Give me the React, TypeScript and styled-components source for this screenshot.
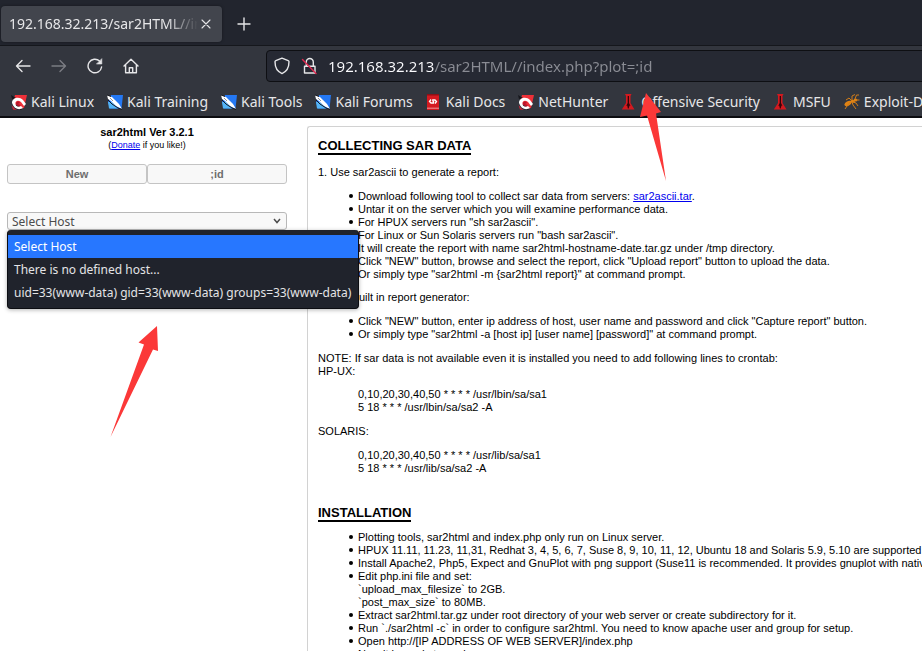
import React from "react";
import styled, { createGlobalStyle } from "styled-components";

const GlobalStyle = createGlobalStyle`
  *, *::before, *::after { box-sizing: border-box; }
  body { margin: 0; background: #fff; }
  button, input, select { font: inherit; margin: 0; }
`;

const uiFont = `"Noto Sans", sans-serif`;
const pageFont = `"Liberation Sans", Arial, sans-serif`;

const Window = styled.div`
  position: relative;
  display: flex;
  flex-direction: column;
  height: 100vh;
  overflow: hidden;
`;

const Chrome = styled.header`
  flex: none;
  background: #33363e;
  border-bottom: 2px solid #0c0c10;
  color: #e6e6e8;
  font: 14px/20px ${uiFont};
`;

const TabBar = styled.div`
  display: flex;
  align-items: center;
  gap: 10px;
  height: 46px;
  padding: 2px 1px 0;
  background: #22252e;
  border-bottom: 1px solid #15171c;
`;

const Tab = styled.div`
  display: flex;
  align-items: center;
  width: 221px;
  height: 36px;
  padding: 0 8px;
  background: #42454d;
  border-radius: 4px;
  box-shadow: 0 0 3px rgba(0, 0, 0, 0.4);
`;

const TabTitle = styled.span`
  flex: 1;
  min-width: 0;
  overflow: hidden;
  white-space: nowrap;
  mask-image: linear-gradient(to left, transparent, #000 32px);
`;

const IconButton = styled.button<{ $size?: number }>`
  display: flex;
  flex: none;
  align-items: center;
  justify-content: center;
  width: ${(p) => p.$size ?? 24}px;
  height: ${(p) => p.$size ?? 24}px;
  padding: 0;
  border: 0;
  background: none;
  color: inherit;

  &:disabled { color: #7b7d83; }
`;

const Toolbar = styled.div`
  display: flex;
  align-items: center;
  height: 40px;
  padding-left: 11px;
`;

const NavButtons = styled.nav`
  display: flex;
  gap: 12px;
  width: 255px;
`;

const UrlBar = styled.div`
  display: flex;
  flex: 1;
  align-items: center;
  gap: 7px;
  height: 32px;
  margin-right: -4px;
  padding-left: 7px;
  background: #262933;
  border: 1px solid #0e0f13;
  border-radius: 4px;
`;

const UrlInput = styled.input`
  flex: 1;
  min-width: 0;
  height: 24px;
  padding: 0;
  border: 0;
  outline: 0;
  font-size: 15px;
  color: transparent;
  background: linear-gradient(90deg, #fbfbfe 106px, #8a8c94 106px);
  background-clip: text;
`;

const Bookmarks = styled.nav`
  display: flex;
  gap: 13px;
  height: 30px;
  padding: 2px 11px 0;
`;

const Bookmark = styled.a`
  display: flex;
  flex: none;
  align-items: center;
  gap: 4px;
  color: inherit;
  text-decoration: none;
  white-space: nowrap;

  svg { flex: none; }
`;

const Page = styled.div`
  display: flex;
  flex: 1;
  gap: 20px;
  min-height: 0;
  padding: 8px 0 0 7px;
  color: #000;
  font: 11px/13px ${pageFont};
`;

const Sidebar = styled.aside`
  flex: none;
  width: 280px;
  text-align: center;
`;

const Version = styled.strong`
  display: block;
`;

const DonateLine = styled.p`
  margin: 0 0 12px;
  font-size: 9px;
`;

const Link = styled.a`
  color: #0000ee;
`;

const PlotButtons = styled.div`
  display: flex;
  margin-bottom: 28px;
`;

const PlotButton = styled.button`
  flex: 1;
  height: 20px;
  padding: 0;
  border: 1px solid #c4c4c4;
  border-radius: 3px;
  background: #f8f8f8;
  color: #6e6e6e;
  font-weight: bold;
`;

const HostPicker = styled.div`
  position: relative;
  font-family: ${uiFont};
  font-size: 12px;
`;

const HostSelect = styled.select`
  display: block;
  appearance: none;
  width: 100%;
  height: 18px;
  padding: 0 4px;
  border: 1px solid #b8b8b8;
  border-radius: 3px;
  background: #f8f8f8;
  color: #4c4c4c;
`;

const SelectArrow = styled.svg`
  position: absolute;
  top: 6px;
  right: 6px;
  pointer-events: none;
`;

const HostMenu = styled.div`
  position: absolute;
  top: 18px;
  left: 0;
  z-index: 2;
  padding: 5px 0 4px;
  border: 1px solid #0c0d12;
  border-top-width: 0;
  border-radius: 4px;
  background: #20232c;
  box-shadow: 0 1px 4px rgba(0, 0, 0, 0.3);
`;

const HostOption = styled.button`
  display: block;
  width: 100%;
  height: 23px;
  padding: 0 7px 0 6px;
  border: 0;
  background: none;
  color: #e4e4e6;
  text-align: left;
  white-space: nowrap;

  &[aria-selected="true"] { background: #2777ff; color: #fff; }
`;

const Panel = styled.main`
  flex: 1;
  min-width: 0;
  padding: 11px 0 0 10px;
  border: 1px solid #d2d2d2;
  border-width: 1px 0 0 1px;
  border-top-left-radius: 3px;
  overflow: hidden;
  white-space: nowrap;
`;

const Heading = styled.h2`
  width: fit-content;
  margin: 0 0 9px;
  border-bottom: 2px solid #000;
  font-size: 13px;
  line-height: 15px;
`;

const Text = styled.p<{ $before?: number }>`
  margin: ${(p) => p.$before ?? 0}px 0 0;
`;

const List = styled.ul<{ $before?: number; $after?: number }>`
  margin: ${(p) => p.$before ?? 11}px 0 ${(p) => p.$after ?? 11}px;
  padding-left: 40px;
  list-style: none;

  li::before {
    content: "";
    display: inline-block;
    width: 4px;
    height: 4px;
    margin: 0 5px 0 -9px;
    border-radius: 50%;
    background: #000;
    vertical-align: 2px;
  }
`;

const Cron = styled.div<{ $before?: number; $after?: number }>`
  margin: ${(p) => p.$before ?? 11}px 0 ${(p) => p.$after ?? 11}px;
  padding-left: 40px;
`;

const Arrows = styled.svg`
  position: absolute;
  top: 0;
  left: 0;
  z-index: 3;
  pointer-events: none;
`;

const stroke = {
  fill: "none",
  stroke: "currentColor",
  strokeWidth: 1.4,
  strokeLinecap: "round" as const,
  strokeLinejoin: "round" as const,
};

const BackIcon = () => (
  <svg width="16" height="16" viewBox="0 0 16 16" {...stroke}>
    <path d="M15 8H1.5M7 2.5 1.5 8 7 13.5" />
  </svg>
);

const ForwardIcon = () => (
  <svg width="16" height="16" viewBox="0 0 16 16" {...stroke}>
    <path d="M1 8h13.5M9 2.5 14.5 8 9 13.5" />
  </svg>
);

const ReloadIcon = () => (
  <svg width="16" height="16" viewBox="0 0 16 16" {...stroke}>
    <path d="M14.6 9A6.8 6.8 0 1 1 12.6 3.1" />
    <path d="M14.8 1v5H9.8z" fill="currentColor" strokeWidth="0.6" />
  </svg>
);

const HomeIcon = () => (
  <svg width="16" height="16" viewBox="0 0 16 16" {...stroke}>
    <path d="M1 8 8 1.2 15 8M2.6 6.8V14.8h10.8V6.8M6.3 14.6V9.8h3.4v4.8" />
  </svg>
);

const ShieldIcon = () => (
  <svg width="16" height="18" viewBox="0 0 16 18" {...stroke}>
    <path d="M8 1.2 14.2 3.6Q15 3.9 15 4.8C15 10 13 14.5 8 16.6 3 14.5 1 10 1 4.8Q1 3.9 1.8 3.6Z" />
  </svg>
);

const LockIcon = () => (
  <svg width="16" height="18" viewBox="0 0 16 18" {...stroke}>
    <path d="M3.500 9.200h10.500v6.800H3.500zM5.300 9V5a3.500 3.500 0 0 1 7 0v4" />
    <path d="M1.500 2.500 15 16.500" stroke="#e22850" strokeWidth="1.4" />
  </svg>
);

const DragonIcon = () => (
  <svg width="16" height="16" viewBox="0 0 16 16">
    <path d="M4 1h12l-3 13-7 1-4-6z" fill="#ee3038" />
    <path d="M0 1 5 4 1 5zM1 9l4 6 6 1-3-4z" fill="#16171c" />
    <path d="M1 9C1 4 8 2 12 6l3 4-2 2-3-4C7 5.500 4 7 4.500 10S8 13 10 12l2 2c-4 2.500-9 1-11-5z" fill="#fff" />
    <path d="M5 9c1-2 3-2 4 0l-2 1 3 1-2 1.500C6 12 5 11 5 9z" fill="#b8152b" />
    <path d="m.5 11 3 3.500L6 16l-4-.5z" fill="#d6253a" />
  </svg>
);

const KnifeIcon = () => (
  <svg width="16" height="16" viewBox="0 0 16 16">
    <path d="M4 1h12l-1.500 13.500H3L1 8z" fill="#2478f4" />
    <path d="M1 8h4l6 6.500H2z" fill="#53b4f8" />
    <path d="m0 1 5 2 3 3 4 4 3 5-6-3-5-5L1 5z" fill="#fff" />
    <path d="m0 1 4 1.500M1 6l4 4 6 4 4 1.500" fill="none" stroke="#17191f" strokeWidth="1" />
    <path d="m3 4 3 3" stroke="#8d939f" strokeWidth="1" />
  </svg>
);

const DocsIcon = () => (
  <svg width="16" height="16" viewBox="0 0 16 16">
    <path d="M1 0h12v16H1z" fill="#d51920" />
    <path d="M1 0h12v1.500H1z" fill="#8d1016" />
    <path d="M1 14.200h12" stroke="#f09a9c" />
    <path d="M5 5.500 3.500 7.500 5 9h2.500V7M9 9.500l1.500-2L9 6H6.800v1.500" fill="none" stroke="#fff" strokeWidth="1.300" />
  </svg>
);

const TowerIcon = () => (
  <svg width="16" height="16" viewBox="0 0 16 16">
    <path d="M4 0h6.500l-1 2v7l4 6.500H.8L5 9V2z" fill="#d3191f" />
    <path d="M6.700 2h1.300v7l1.500 3-1-.5-.8 3h-.8l-.7-3-1 .5 1.500-3z" fill="#350508" />
  </svg>
);

const AntIcon = () => (
  <svg width="16" height="16" viewBox="0 0 16 16">
    <g fill="#e08314">
      <ellipse cx="4" cy="9.500" rx="3.800" ry="2.200" transform="rotate(-28 4 9.500)" />
      <ellipse cx="8.500" cy="7.200" rx="2.200" ry="1.500" />
      <ellipse cx="11.500" cy="6" rx="1.900" ry="1.500" />
    </g>
    <path d="M8 7 5 4 2 6M8 6 8 2l3-1.500M11 5l1.500-4H15M12 6h3.500M9 8l3 1 2 3M8 8l1 3 3 4M6 8l-3 4-2 3" fill="none" stroke="#d27d18" strokeWidth="1" />
  </svg>
);

const bookmarks = [
  { label: "Kali Linux", Icon: DragonIcon },
  { label: "Kali Training", Icon: KnifeIcon },
  { label: "Kali Tools", Icon: KnifeIcon },
  { label: "Kali Forums", Icon: KnifeIcon },
  { label: "Kali Docs", Icon: DocsIcon },
  { label: "NetHunter", Icon: DragonIcon },
  { label: "Offensive Security", Icon: TowerIcon },
  { label: "MSFU", Icon: TowerIcon },
  { label: "Exploit-DB", Icon: AntIcon },
];

const hosts = [
  "Select Host",
  "There is no defined host...",
  "uid=33(www-data) gid=33(www-data) groups=33(www-data)",
];

export default function App() {
  const [host, setHost] = React.useState(hosts[0]);

  return (
    <Window>
      <GlobalStyle />
      <Chrome>
        <TabBar>
          <Tab>
            <TabTitle>192.168.32.213/sar2HTML//index.php</TabTitle>
            <IconButton $size={16} aria-label="Close tab">
              <svg width="10" height="10" viewBox="0 0 10 10" {...stroke} strokeWidth="1.1">
                <path d="m1 1 8 8M9 1 1 9" />
              </svg>
            </IconButton>
          </Tab>
          <IconButton aria-label="New tab">
            <svg width="14" height="14" viewBox="0 0 14 14" {...stroke}>
              <path d="M7 1v12M1 7h12" />
            </svg>
          </IconButton>
        </TabBar>
        <Toolbar>
          <NavButtons>
            <IconButton aria-label="Back"><BackIcon /></IconButton>
            <IconButton aria-label="Forward" disabled><ForwardIcon /></IconButton>
            <IconButton aria-label="Reload"><ReloadIcon /></IconButton>
            <IconButton aria-label="Home"><HomeIcon /></IconButton>
          </NavButtons>
          <UrlBar>
            <IconButton $size={16} aria-label="Tracking protection"><ShieldIcon /></IconButton>
            <IconButton aria-label="Connection not secure"><LockIcon /></IconButton>
            <UrlInput
              aria-label="Address"
              defaultValue="192.168.32.213/sar2HTML//index.php?plot=;id"
            />
          </UrlBar>
        </Toolbar>
        <Bookmarks aria-label="Bookmarks">
          {bookmarks.map(({ label, Icon }) => (
            <Bookmark href="#" key={label}>
              <Icon />
              {label}
            </Bookmark>
          ))}
        </Bookmarks>
      </Chrome>

      <Page>
        <Sidebar>
          <Version>sar2html Ver 3.2.1</Version>
          <DonateLine>
            (<Link href="#">Donate</Link> if you like!)
          </DonateLine>
          <PlotButtons>
            <PlotButton>New</PlotButton>
            <PlotButton>;id</PlotButton>
          </PlotButtons>
          <HostPicker>
            <HostSelect aria-label="Host" value={host} onChange={(e) => setHost(e.target.value)}>
              {hosts.map((name) => (
                <option key={name}>{name}</option>
              ))}
            </HostSelect>
            <SelectArrow width="8" height="6" viewBox="0 0 8 6">
              <path d="m1 1 3 3.500L7 1" fill="none" stroke="#4c4c4c" strokeWidth="1.500" />
            </SelectArrow>
            <HostMenu role="listbox" aria-label="Hosts">
              {hosts.map((name) => (
                <HostOption
                  key={name}
                  role="option"
                  aria-selected={name === host}
                  onClick={() => setHost(name)}
                >
                  {name}
                </HostOption>
              ))}
            </HostMenu>
          </HostPicker>
        </Sidebar>

        <Panel>
          <Heading>COLLECTING SAR DATA</Heading>
          <Text $before={11}>1. Use sar2ascii to generate a report:</Text>
          <List $after={10}>
            <li>Download following tool to collect sar data from servers: <Link href="#">sar2ascii.tar</Link>.</li>
            <li>Untar it on the server which you will examine performance data.</li>
            <li>For HPUX servers run "sh sar2ascii".</li>
            <li>For Linux or Sun Solaris servers run "bash sar2ascii".</li>
            <li>It will create the report with name sar2html-hostname-date.tar.gz under /tmp directory.</li>
            <li>Click "NEW" button, browse and select the report, click "Upload report" button to upload the data.</li>
            <li>Or simply type "sar2html -m {"{sar2html report}"}" at command prompt.</li>
          </List>
          <Text>2. Use built in report generator:</Text>
          <List>
            <li>Click "NEW" button, enter ip address of host, user name and password and click "Capture report" button.</li>
            <li>Or simply type "sar2html -a [host ip] [user name] [password]" at command prompt.</li>
          </List>
          <Text>NOTE: If sar data is not available even it is installed you need to add following lines to crontab:</Text>
          <Text>HP-UX:</Text>
          <Cron $before={10}>
            <Text>0,10,20,30,40,50 * * * * /usr/lbin/sa/sa1</Text>
            <Text>5 18 * * * /usr/lbin/sa/sa2 -A</Text>
          </Cron>
          <Text>SOLARIS:</Text>
          <Cron $after={30}>
            <Text>0,10,20,30,40,50 * * * * /usr/lib/sa/sa1</Text>
            <Text>5 18 * * * /usr/lib/sa/sa2 -A</Text>
          </Cron>
          <Heading>INSTALLATION</Heading>
          <List $before={9}>
            <li>Plotting tools, sar2html and index.php only run on Linux server.</li>
            <li>HPUX 11.11, 11.23, 11,31, Redhat 3, 4, 5, 6, 7, Suse 8, 9, 10, 11, 12, Ubuntu 18 and Solaris 5.9, 5.10 are supported for reporting.</li>
            <li>Install Apache2, Php5, Expect and GnuPlot with png support (Suse11 is recommended. It provides gnuplot with native png support.)</li>
            <li>
              Edit php.ini file and set:
              <Text>`upload_max_filesize` to 2GB.</Text>
              <Text>`post_max_size` to 80MB.</Text>
            </li>
            <li>Extract sar2html.tar.gz under root directory of your web server or create subdirectory for it.</li>
            <li>Run `./sar2html -c` in order to configure sar2html. You need to know apache user and group for setup.</li>
            <li>Open http://[IP ADDRESS OF WEB SERVER]/index.php</li>
            <li>Now it is ready to work.</li>
          </List>
        </Panel>
      </Page>

      <Arrows width="670" height="440" viewBox="0 0 670 440" fill="#fb3838" aria-hidden="true">
        <path d="m646 93 15 19-5 1.500 10 67.500-19-65.500-7 1.500z" />
        <path d="m157 326 1 25-5-1.500-42.500 87.500L144 344.500l-5.500-2z" />
      </Arrows>
    </Window>
  );
}
